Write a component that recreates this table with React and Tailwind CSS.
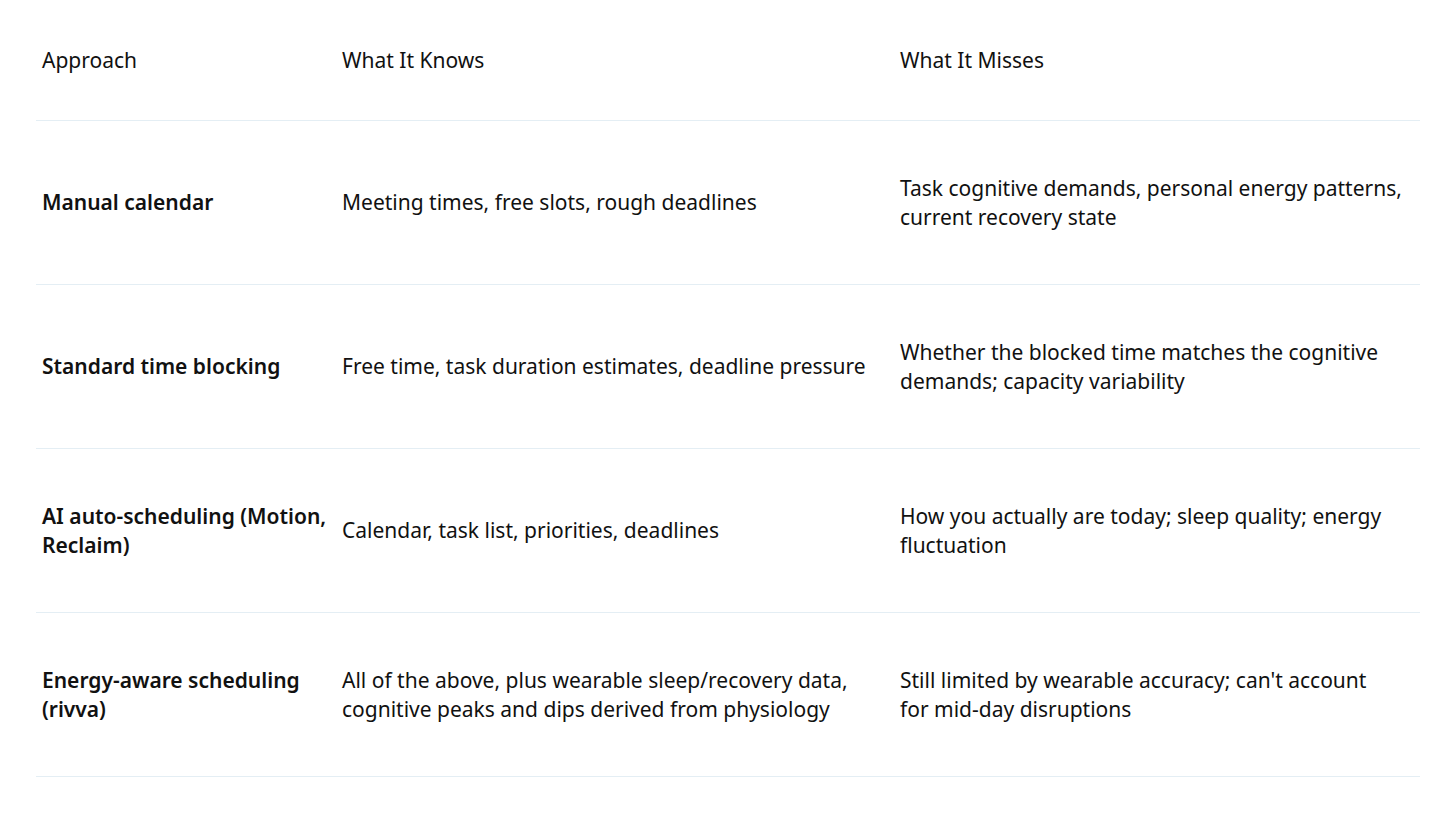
const rows = [
  {
    approach: 'Manual calendar',
    knows: 'Meeting times, free slots, rough deadlines',
    misses: 'Task cognitive demands, personal energy patterns, current recovery state',
  },
  {
    approach: 'Standard time blocking',
    knows: 'Free time, task duration estimates, deadline pressure',
    misses: 'Whether the blocked time matches the cognitive demands; capacity variability',
  },
  {
    approach: 'AI auto-scheduling (Motion, Reclaim)',
    knows: 'Calendar, task list, priorities, deadlines',
    misses: 'How you actually are today; sleep quality; energy fluctuation',
  },
  {
    approach: 'Energy-aware scheduling (rivva)',
    knows: 'All of the above, plus wearable sleep/recovery data, cognitive peaks and dips derived from physiology',
    misses: (
      <>
        Still limited by wearable accuracy; can't account
        <br />
        for mid-day disruptions
      </>
    ),
  },
];

export default function App() {
  return (
    <div className="w-[1456px] h-[819px] bg-white px-[36px] text-[#111] text-[21px] leading-[29px] font-['Noto_Sans',sans-serif]">
      {/* header */}
      <div className="grid grid-cols-[300px_558px_1fr] h-[121px] items-center border-b border-[#e4eef4]">
        <div className="px-[6px]">Approach</div>
        <div className="px-[6px]">What It Knows</div>
        <div className="px-[6px]">What It Misses</div>
      </div>
      {rows.map(r => (
        <div key={r.approach} className="grid grid-cols-[300px_558px_1fr] h-[164px] items-center border-b border-[#e4eef4]">
          <div className="px-[6px] font-semibold">{r.approach}</div>
          <div className="px-[6px]">{r.knows}</div>
          <div className="px-[6px]">{r.misses}</div>
        </div>
      ))}
    </div>
  );
}
